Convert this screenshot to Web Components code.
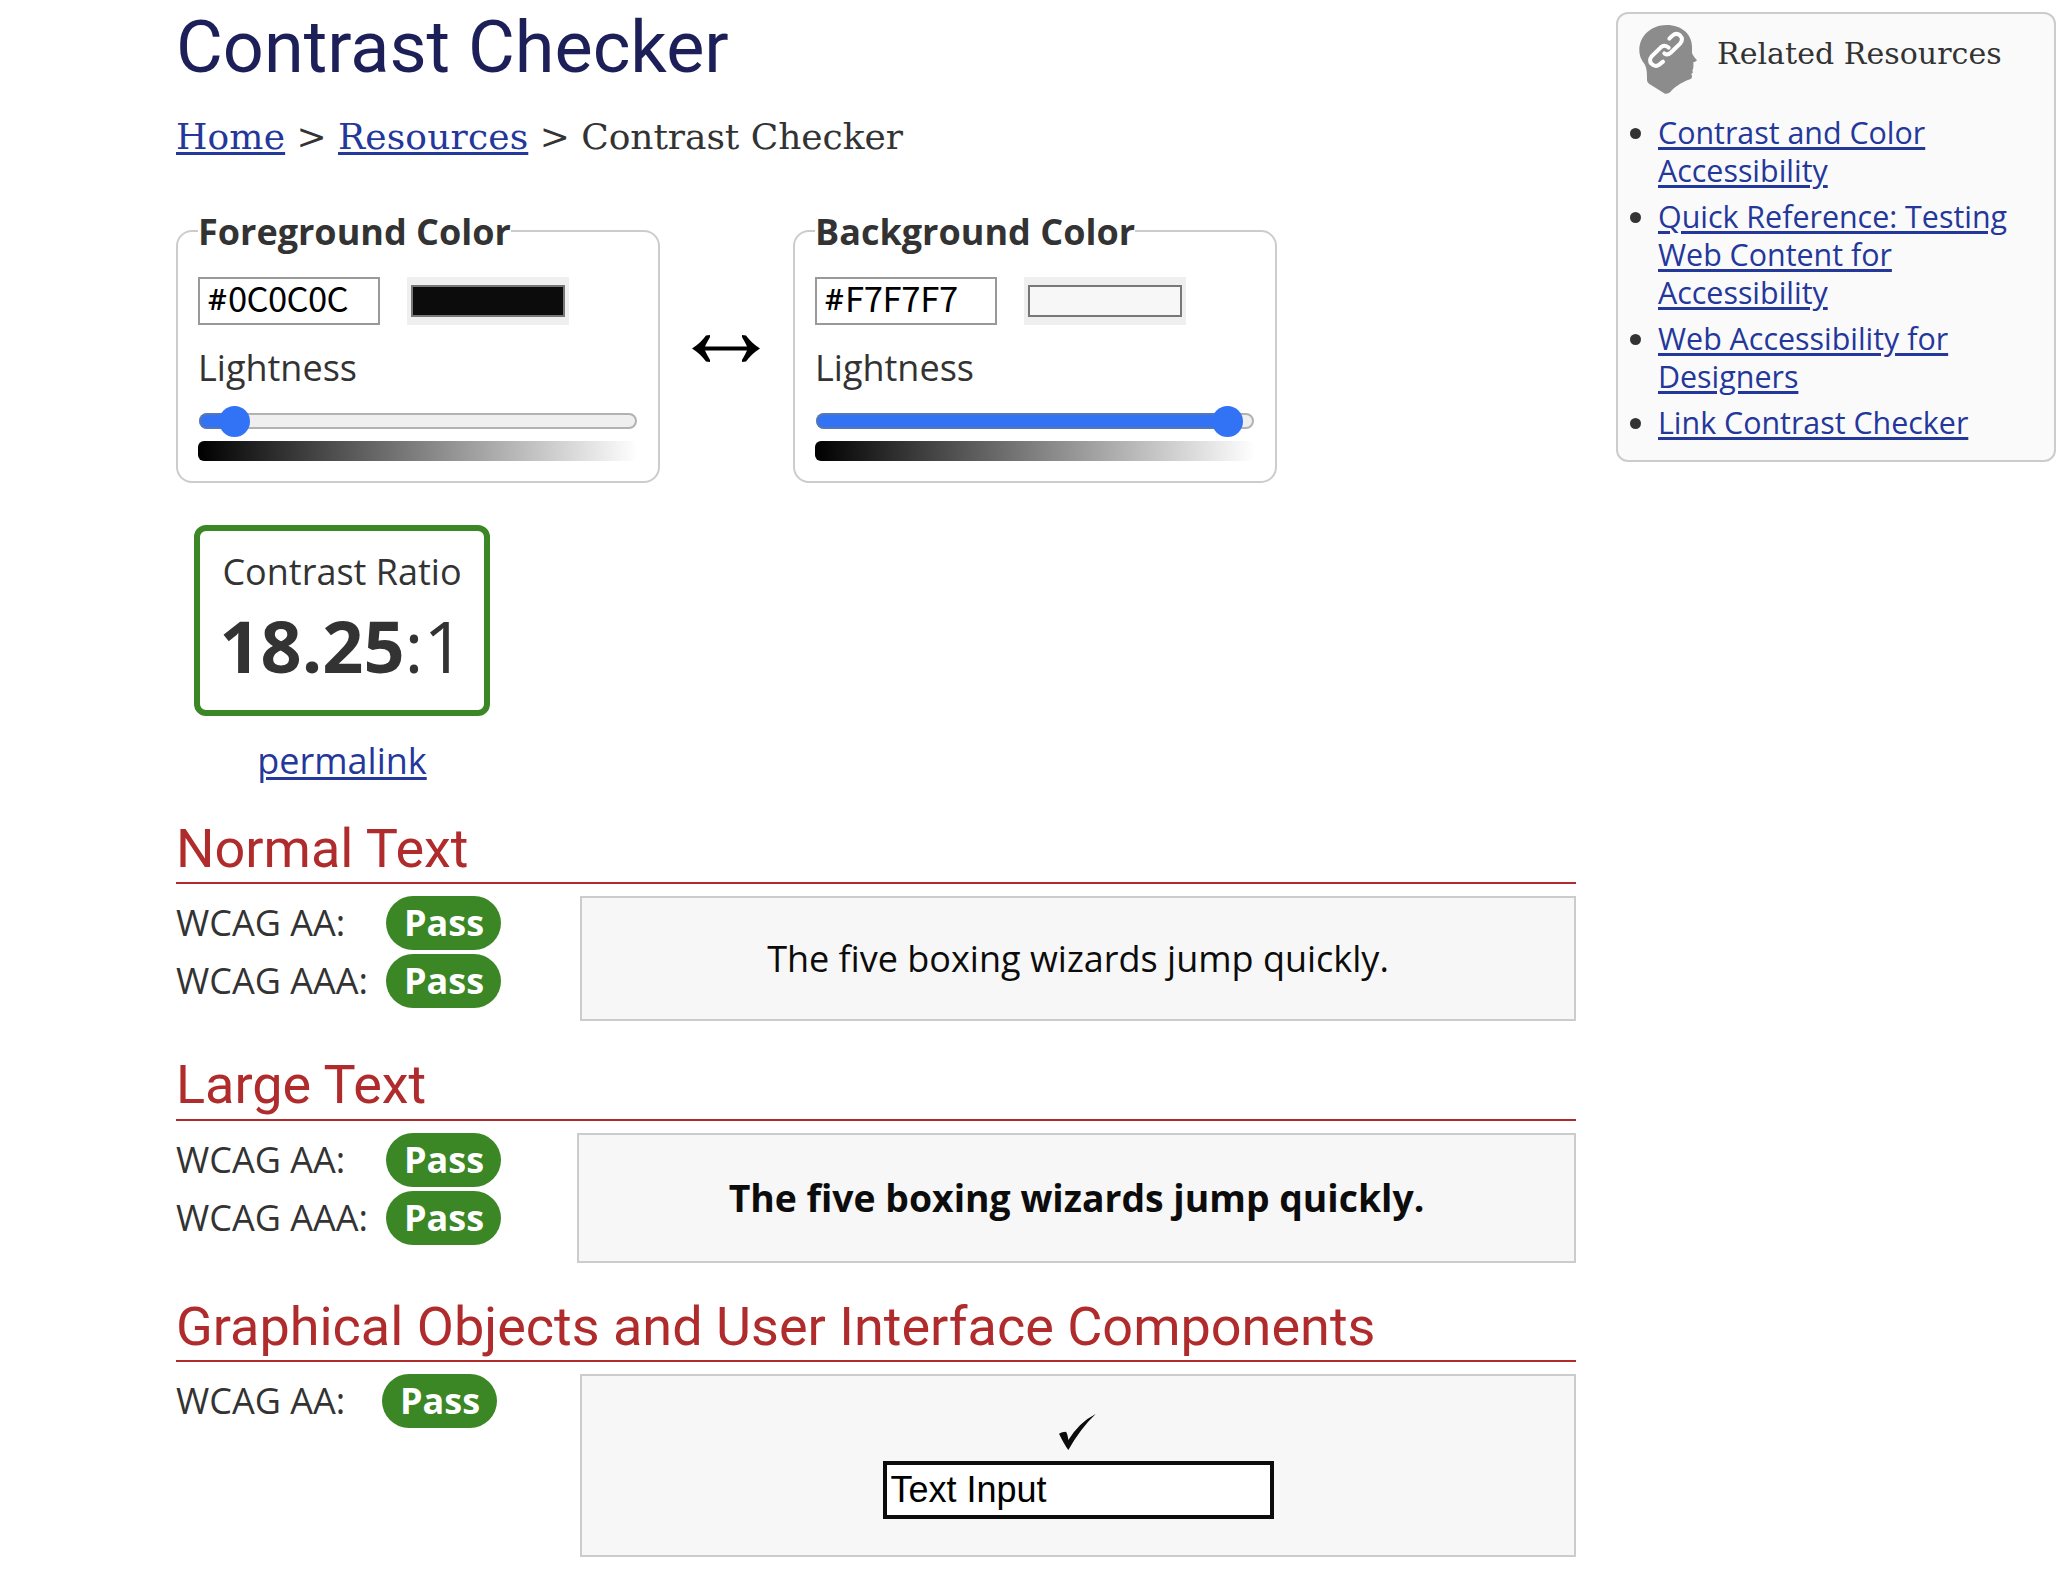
<!DOCTYPE html>
<html lang="en">
<head>
<meta charset="utf-8">
<title>Contrast Checker</title>
<style>
body{margin:0;background:#fff;color:#333;font:400 36px/49px "Open Sans",sans-serif}
</style>
</head>
<body>
<checker-page></checker-page>
<script>
const define = (name, html) => {
  const tpl = document.createElement('template');
  tpl.innerHTML = html;
  customElements.define(name, class extends HTMLElement {
    constructor() {
      super();
      this.attachShadow({mode: 'open'}).append(tpl.content.cloneNode(true));
    }
  });
};

define('bread-crumb', `
<style>
:host{display:block;margin-top:22px;font:400 36px/50px "DejaVu Serif",serif;white-space:nowrap;letter-spacing:-.05px}
a{letter-spacing:.15px;color:#24379b;text-decoration:underline;text-decoration-thickness:3px;text-underline-offset:3px}
</style>
<nav><a href="#">Home</a> &gt; <a href="#">Resources</a> &gt; Contrast Checker</nav>`);

define('color-control', `
<style>
:host{display:block;width:484px}
fieldset{box-sizing:border-box;margin:0;width:484px;height:276px;padding:0 20px;border:2px solid #ccc;border-radius:16px;min-width:0}
legend{padding:0;font-weight:700;height:47px;white-space:nowrap}
.row{display:flex;gap:27px;padding-top:23px}
.hex{box-sizing:border-box;width:182px;height:48px;border:2px solid #999;background:#fff;color:#000;
  padding-left:8px;font:400 34.6px/37px "Noto Sans CJK JP",sans-serif;white-space:nowrap;display:flex;letter-spacing:var(--track)}
.hex i{font:600 29px/39px "Open Sans",sans-serif;width:20px;letter-spacing:0}
.well{box-sizing:border-box;width:162px;height:48px;padding:8px 4px;background:#efefef}
.swatch{box-sizing:border-box;height:32px;border:2px solid #777;background:var(--swatch)}
.label{margin-top:18px;height:49px}
.slider{display:flex;align-items:center;height:32px;margin-top:13px}
.track{box-sizing:border-box;width:438px;height:16px;margin-left:1px;border:2px solid #b2b2b2;border-radius:8px;background:#efefef;display:flex;align-items:center}
.fill{flex:none;box-sizing:border-box;height:16px;margin-left:-2px;width:var(--pos);border:2px solid #5577ba;border-right:0;border-radius:8px 0 0 8px;background:#3273f6}
.thumb{flex:none;width:31px;height:31px;margin-left:-15.5px;border-radius:50%;background:#3273f6}
.ramp{height:20px;margin-top:4px;border-radius:6px;background:linear-gradient(to right,#000,#fff)}
</style>
<fieldset>
  <legend><slot name="legend"></slot></legend>
  <div class="row"><div class="hex"><i style="font-style:normal">#</i><slot name="hex"></slot></div><div class="well"><div class="swatch"></div></div></div>
  <div class="label">Lightness</div>
  <div class="slider"><div class="track"><div class="fill"></div><div class="thumb"></div></div></div>
  <div class="ramp"></div>
</fieldset>`);

define('swap-button', `
<style>
:host{display:flex;width:133px;justify-content:center;padding:128px 2px 0 0;box-sizing:border-box}
svg{display:block}
</style>
<svg width="68" height="27" viewBox="0 0 68 27"><path fill="#000" d="M0 13.500C6 9.500 11 5 14 .5L18 0V2C16.500 5 14.500 8 13 11.500H55C53.500 8 51.500 5 50 2V0L54 .5C57 5 62 9.500 68 13.500C62 17.500 57 22 54 26.500L50 27V25C51.500 22 53.500 19 55 15.500H13C14.500 19 16.500 22 18 25V27L14 26.500C11 22 6 17.500 0 13.500Z"/></svg>`);

define('ratio-box', `
<style>
:host{display:flex;flex-direction:column;width:296px;margin:42px 0 0 18px;text-align:center}
.box{box-sizing:border-box;height:191px;border:6px solid #3b8625;border-radius:12px;padding-top:16px}
.num{font-size:72px;line-height:98px}
a{margin-top:20px;color:#24379b;text-decoration:underline;text-decoration-thickness:3px;text-underline-offset:3px}
</style>
<div class="box"><div>Contrast Ratio</div><div class="num"><b>18.25</b>:1</div></div>
<a href="#">permalink</a>`);

define('pass-row', `
<style>
:host{display:flex;height:54px;line-height:54px;white-space:nowrap}
.label{width:var(--label,210px)}
.pill{box-sizing:border-box;width:115px;height:54px;padding-left:1px;border-radius:27px;background:#3b8625;color:#fff;font-weight:700;text-align:center}
</style>
<div class="label"><slot></slot></div><div class="pill">Pass</div>`);

define('result-section', `
<style>
:host{display:block;margin-top:31px}
h2{margin:0;padding:var(--over,1px) 0 var(--under,1px);border-bottom:2px solid #b02b2c;color:#b02b2c;font:400 54px/64px Roboto,sans-serif;white-space:nowrap}
.row{display:flex;justify-content:space-between;margin-top:12px}
.list{display:flex;flex-direction:column;gap:4px}
.panel{box-sizing:border-box;width:var(--w,996px);height:var(--h);border:2px solid #ccc;background:#f7f7f7;color:#0c0c0c;
  display:flex;flex-direction:column;align-items:center;justify-content:center;white-space:nowrap}
</style>
<h2><slot name="title"></slot></h2>
<div class="row"><div class="list"><slot></slot></div><div class="panel"><slot name="sample"></slot></div></div>`);

define('ui-sample', `
<style>
:host{display:flex;flex-direction:column;align-items:center;gap:11px;height:105px;padding-top:2px}
svg{display:block;margin-right:2px}
.input{box-sizing:border-box;width:391px;height:58px;border:4px solid #0c0c0c;background:#fff;color:#000;padding-left:4px;font:400 36px/50px "Liberation Sans",sans-serif}
</style>
<svg width="37" height="36" viewBox="0 0 111 108"><path fill="#0c0c0c" d="M0 59Q8 53 21 53Q26 60 28 78Q62 24 110 0Q64 44 28 108Q16 92 0 59Z"/></svg>
<div class="input">Text Input</div>`);

define('related-link', `
<style>
:host{display:flex}
i{flex:none;width:11px;height:11px;margin:14px 17px 0 0;border-radius:50%;background:#333}
a{color:#24379b;text-decoration:underline;text-decoration-thickness:3px;text-underline-offset:3px}
</style>
<i></i><a href="#"><slot></slot></a>`);

define('related-resources', `
<style>
:host{display:block;box-sizing:border-box;width:440px;height:450px;margin:12px 0 0 40px;border:2px solid #ccc;border-radius:12px;background:#fafafa}
.head{display:flex;gap:20px;padding:11px 0 0 21px;font:400 30px/44px "DejaVu Serif",serif;letter-spacing:.05px;white-space:nowrap}
.head span{padding-top:7px}
svg{display:block;flex:none}
.list{display:flex;flex-direction:column;gap:8px;padding:20px 20px 0 12px;font-size:30.4px;line-height:38px}
</style>
<div class="head">
<svg width="58" height="69" viewBox="117 75 174 207"><path fill="#8c8c8c" d="M200 75C246 75 276 104 276 140V160C280 169 286 175 291 181C288 185 283 186 280 187C281 199 280 207 277 212L279 217L274 222C279 233 274 238 266 239C244 247 222 262 211 276Q204 283 195 281L147 251Q141 247 141 241C141 215 140 205 134 193C124 179 118 168 118 150C118 108 153 75 200 75Z"/><path fill="none" stroke="#fff" stroke-width="12" stroke-linecap="round" d="M208 116L217 107Q229 97 240 106Q251 117 241 130L212 158Q202 167 193 160M206 143Q196 133 185 140L155 169Q146 181 154 191Q166 203 178 194L189 185"/></svg>
<span>Related Resources</span></div>
<div class="list">
<related-link>Contrast and Color Accessibility</related-link>
<related-link>Quick Reference: Testing Web Content for Accessibility</related-link>
<related-link>Web Accessibility for Designers</related-link>
<related-link>Link Contrast Checker</related-link>
</div>`);

define('checker-page', `
<style>
:host{display:flex;align-items:flex-start;height:1592px;overflow:hidden;padding-left:176px;box-sizing:border-box}
main{flex:none;width:1400px;display:flex;flex-direction:column}
related-resources{flex:none}
h1{margin:6px 0 0;color:#1c1f58;font:400 72px/84px Roboto,sans-serif}
.controls{display:flex;margin-top:45px}
.first{margin-top:32px;--over:0px}
.large{font-weight:700;font-size:37.33px;padding-bottom:2px}
</style>
<main>
  <h1>Contrast Checker</h1>
  <bread-crumb></bread-crumb>
  <div class="controls">
    <color-control style="--swatch:#0c0c0c;--pos:35.3px;--track:-.65px"><span slot="legend">Foreground Color</span><span slot="hex">0C0C0C</span></color-control>
    <swap-button></swap-button>
    <color-control style="--swatch:#f7f7f7;--pos:411px;--track:-.35px"><span slot="legend">Background Color</span><span slot="hex">F7F7F7</span></color-control>
  </div>
  <ratio-box></ratio-box>
  <result-section class="first" style="--h:125px"><span slot="title">Normal Text</span>
    <pass-row>WCAG AA:</pass-row><pass-row>WCAG AAA:</pass-row>
    <span slot="sample">The five boxing wizards jump quickly.</span></result-section>
  <result-section style="--h:130px;--w:999px;--over:1px;--under:2px"><span slot="title">Large Text</span>
    <pass-row>WCAG AA:</pass-row><pass-row>WCAG AAA:</pass-row>
    <span slot="sample" class="large">The five boxing wizards jump quickly.</span></result-section>
  <result-section style="--h:183px"><span slot="title">Graphical Objects and User Interface Components</span>
    <pass-row style="--label:206px">WCAG AA:</pass-row>
    <ui-sample slot="sample"></ui-sample></result-section>
</main>
<related-resources></related-resources>`);
</script>
</body>
</html>
